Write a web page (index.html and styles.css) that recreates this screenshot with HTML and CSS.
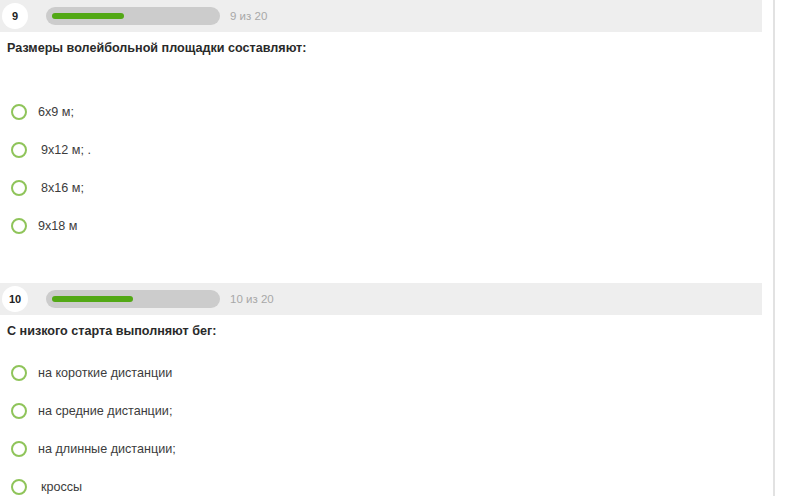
FILE: index.html
```html
<!DOCTYPE html>
<html lang="ru">
<head>
<meta charset="utf-8">
<link rel="stylesheet" href="styles.css">
</head>
<body>
<div class="page">
  <div class="content">
    <section class="question">
      <div class="header">
        <span class="num">9</span>
        <div class="track"><div class="fill" style="width:72px"></div></div>
        <span class="count">9 из 20</span>
      </div>
      <p class="qtext">Размеры волейбольной площадки составляют:</p>
      <div class="spacer"></div>
      <ul class="options">
        <li class="option"><span class="ring"></span><span class="label">6x9 м;</span></li>
        <li class="option"><span class="ring"></span><span class="label shifted">9x12 м; .</span></li>
        <li class="option"><span class="ring"></span><span class="label shifted">8x16 м;</span></li>
        <li class="option"><span class="ring"></span><span class="label">9x18 м</span></li>
      </ul>
    </section>
    <section class="question">
      <div class="header">
        <span class="num">10</span>
        <div class="track"><div class="fill" style="width:81px"></div></div>
        <span class="count">10 из 20</span>
      </div>
      <p class="qtext">С низкого старта выполняют бег:</p>
      <ul class="options">
        <li class="option"><span class="ring"></span><span class="label">на короткие дистанции</span></li>
        <li class="option"><span class="ring"></span><span class="label">на средние дистанции;</span></li>
        <li class="option"><span class="ring"></span><span class="label">на длинные дистанции;</span></li>
        <li class="option"><span class="ring"></span><span class="label shifted">кроссы</span></li>
      </ul>
    </section>
  </div>
</div>
</body>
</html>
```

FILE: styles.css
```css
html, body {
  margin: 0;
  padding: 0;
  background: #ffffff;
  font-family: "Liberation Sans", Arial, sans-serif;
  color: #333333;
  overflow: hidden;
}

.page {
  width: 773px;
  min-height: 496px;
  border-right: 2px solid #e2e2e2;
}

.content {
  width: 762px;
}

.question {
  padding-bottom: 38px;
}

.header {
  display: flex;
  align-items: center;
  height: 32px;
  background: #eeeeee;
}

.num {
  display: flex;
  align-items: center;
  justify-content: center;
  width: 26px;
  height: 26px;
  margin-left: 2px;
  border-radius: 50%;
  background: #ffffff;
  font-size: 11px;
  font-weight: bold;
  color: #222222;
}

.track {
  display: flex;
  align-items: center;
  width: 174px;
  height: 18px;
  margin-left: 18px;
  border-radius: 9px;
  background: #cccccc;
}

.fill {
  height: 6px;
  margin-left: 6px;
  border-radius: 3px;
  background: #52a815;
}

.count {
  margin-left: 10px;
  font-size: 11.5px;
  color: #a8a8a8;
}

.qtext {
  margin: 9px 0 0 7px;
  font-size: 12.6px;
  line-height: 14px;
  font-weight: bold;
  color: #2a2a2a;
}

.spacer {
  height: 22px;
}

.options {
  list-style: none;
  margin: 16px 0 0 0;
  padding: 0;
}

.option {
  display: flex;
  align-items: center;
  height: 38px;
}

.ring {
  box-sizing: border-box;
  width: 16px;
  height: 16px;
  margin-left: 11px;
  border: 2px solid #8fc45a;
  border-radius: 50%;
}

.label {
  margin-left: 11px;
  font-size: 12.6px;
  color: #3c3c3c;
}

.label.shifted {
  margin-left: 14px;
}
```
